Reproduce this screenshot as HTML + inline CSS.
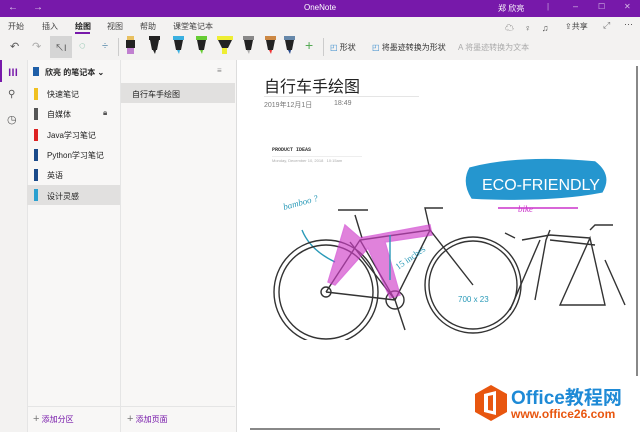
<html><head><style>
body{margin:0;width:640px;height:432px;overflow:hidden;font-family:"Liberation Sans","Noto Sans CJK SC",sans-serif;background:#fff;position:relative;font-size:8px;color:#222}
.a{position:absolute}
</style></head><body>
<div class="a" style="left:0;top:0;width:640px;height:17px;background:#7719aa;color:#fff">
<span class="a" style="left:8px;top:2px;font-size:10px;opacity:.8">←</span>
<span class="a" style="left:33px;top:2px;font-size:10px;opacity:.8">→</span>
<span class="a" style="left:304px;top:3px;font-size:8px">OneNote</span>
<span class="a" style="left:498px;top:3px;font-size:8px">郑 欣亮</span>
<span class="a" style="left:547px;top:2px;font-size:8px;opacity:.6">|</span>
<span class="a" style="left:573px;top:1px;font-size:9px;opacity:.7">–</span>
<span class="a" style="left:598px;top:2px;font-size:8px;opacity:.7">☐</span>
<span class="a" style="left:624px;top:2px;font-size:8px;opacity:.7">✕</span>
</div>
<div class="a" style="left:0;top:17px;width:640px;height:43px;background:#f3f2f1"></div>
<div class="a" style="top:21px;left:8px;font-size:8px;color:#444">开始</div>
<div class="a" style="top:21px;left:42px;font-size:8px;color:#444">插入</div>
<div class="a" style="top:21px;left:75px;font-size:8px;color:#222;font-weight:bold">绘图</div>
<div class="a" style="top:32px;left:75px;width:15px;height:2px;background:#7719aa"></div>
<div class="a" style="top:21px;left:107px;font-size:8px;color:#444">视图</div>
<div class="a" style="top:21px;left:140px;font-size:8px;color:#444">帮助</div>
<div class="a" style="top:21px;left:173px;font-size:8px;color:#444">课堂笔记本</div>
<div class="a" style="top:21px;left:505px;font-size:9px;color:#555;word-spacing:8px">☁ ♀ ♫</div>
<div class="a" style="top:21px;left:565px;font-size:8px;color:#444">⇪共享</div>
<div class="a" style="top:20px;left:603px;font-size:9px;color:#777">⤢</div>
<div class="a" style="top:19px;left:624px;font-size:9px;color:#444">···</div>
<div class="a" style="top:40px;left:10px;font-size:11px;color:#555">↶</div>
<div class="a" style="top:40px;left:32px;font-size:11px;color:#aaa">↷</div>
<div class="a" style="top:36px;left:50px;width:22px;height:22px;background:#d5d5d5"></div>
<div class="a" style="top:41px;left:55px;font-size:9px;color:#555">↖I</div>
<div class="a" style="top:40px;left:79px;font-size:11px;color:#5a8">◌</div>
<div class="a" style="top:40px;left:102px;font-size:11px;color:#58a">÷</div>
<div class="a" style="top:38px;left:118px;width:1px;height:18px;background:#ccc"></div>
<svg class="a" style="left:125px;top:36px" width="170" height="22">
<g><rect x="2" y="0" width="7" height="4" fill="#e8c060"/><rect x="1" y="4" width="9" height="8" fill="#222"/><rect x="2" y="12" width="7" height="6" fill="#c080d0"/></g>
<g transform="translate(24,0)"><rect x="0" y="0" width="11" height="4" fill="#222"/><path d="M1 4h9l-2 10h-5z" fill="#222"/><path d="M4 14h3l-1 4z" fill="#222"/></g>
<g transform="translate(48,0)"><rect x="0" y="0" width="11" height="4" fill="#3ab0e0"/><path d="M1 4h9l-2 10h-5z" fill="#222"/><path d="M4 14h3l-1 4z" fill="#3ab0e0"/></g>
<g transform="translate(71,0)"><rect x="0" y="0" width="11" height="4" fill="#6c3"/><path d="M1 4h9l-2 10h-5z" fill="#222"/><path d="M4 14h3l-1 4z" fill="#6c3"/></g>
<g transform="translate(92,0)"><rect x="0" y="0" width="16" height="4" fill="#ee3"/><path d="M1 4h14l-4 8h-6z" fill="#222"/><rect x="5" y="12" width="5" height="6" fill="#ee3"/></g>
<g transform="translate(118,0)"><rect x="0" y="0" width="11" height="4" fill="#888"/><path d="M1 4h9l-2 10h-5z" fill="#222"/><path d="M4 14h3l-1 4z" fill="#aaa"/></g>
<g transform="translate(140,0)"><rect x="0" y="0" width="11" height="4" fill="#c84"/><path d="M1 4h9l-2 10h-5z" fill="#222"/><path d="M4 14h3l-1 4z" fill="#e33"/></g>
<g transform="translate(159,0)"><rect x="0" y="0" width="11" height="4" fill="#68a"/><path d="M1 4h9l-2 10h-5z" fill="#222"/><path d="M4 14h3l-1 4z" fill="#248"/></g>
</svg>
<div class="a" style="top:37px;left:305px;font-size:14px;color:#5a5">+</div>
<div class="a" style="top:38px;left:323px;width:1px;height:18px;background:#ccc"></div>
<div class="a" style="top:42px;left:330px;font-size:8px;color:#333"><span style="color:#38c">◰</span> 形状</div>
<div class="a" style="top:42px;left:372px;font-size:8px;color:#333"><span style="color:#38c">◰</span> 将墨迹转换为形状</div>
<div class="a" style="top:42px;left:458px;font-size:8px;color:#aaa">A 将墨迹转换为文本</div>
<div class="a" style="left:0;top:60px;width:27px;height:372px;background:#f3f2f1"></div>
<div class="a" style="left:0;top:60px;width:2px;height:22px;background:#7719aa"></div>
<div class="a" style="left:8px;top:64px;font-size:10px;color:#7719aa;font-weight:bold">Ⅲ</div>
<div class="a" style="left:8px;top:89px;font-size:10px;color:#555">⚲</div>
<div class="a" style="left:7px;top:113px;font-size:11px;color:#555">◷</div>
<div class="a" style="left:27px;top:60px;width:93px;height:372px;background:#f8f7f6;border-left:1px solid #e5e5e5"></div>
<div class="a" style="left:120px;top:60px;width:115px;height:372px;background:#f8f7f6;border-left:1px solid #e5e5e5;border-right:1px solid #ddd"></div>
<div class="a" style="left:33px;top:67px;width:6px;height:9px;background:#1f5fa8"></div>
<div class="a" style="left:45px;top:67px;font-size:8px;font-weight:bold;color:#222">欣亮 的笔记本 ⌄</div>
<div class="a" style="left:217px;top:66px;font-size:8px;color:#888">≡</div>
<div class="a" style="left:27px;top:185px;width:93px;height:20px;background:#e1e0df"></div>
<div class="a" style="left:121px;top:83px;width:114px;height:20px;background:#e1e0df"></div>
<div class="a" style="left:132px;top:89px;font-size:8px">自行车手绘图</div>
<div class="a" style="left:34px;top:88px;width:4px;height:12px;background:#f0c020"></div><div class="a" style="left:47px;top:89px">快速笔记</div>
<div class="a" style="left:34px;top:108px;width:4px;height:12px;background:#555"></div><div class="a" style="left:47px;top:109px">自媒体</div><div class="a" style="left:103px;top:108px;color:#555">🔒︎</div>
<div class="a" style="left:34px;top:129px;width:4px;height:12px;background:#d22"></div><div class="a" style="left:47px;top:130px">Java学习笔记</div>
<div class="a" style="left:34px;top:149px;width:4px;height:12px;background:#1a4a8a"></div><div class="a" style="left:47px;top:150px">Python学习笔记</div>
<div class="a" style="left:34px;top:169px;width:4px;height:12px;background:#1a4a8a"></div><div class="a" style="left:47px;top:170px">英语</div>
<div class="a" style="left:34px;top:189px;width:4px;height:12px;background:#2aa0d0"></div><div class="a" style="left:47px;top:191px">设计灵感</div>
<div class="a" style="left:27px;top:406px;width:208px;height:1px;background:#e5e5e5"></div>
<div class="a" style="left:33px;top:413px;color:#7719aa;font-size:8px"><span style="font-size:11px;color:#777">+</span> 添加分区</div>
<div class="a" style="left:127px;top:413px;color:#7719aa;font-size:8px"><span style="font-size:11px;color:#777">+</span> 添加页面</div>
<div class="a" style="left:264px;top:73px;font-size:16px;color:#222">自行车手绘图</div>
<div class="a" style="left:264px;top:96px;width:155px;height:1px;background:#e5e5e5"></div>
<div class="a" style="left:264px;top:100px;font-size:7px;color:#777">2019年12月1日</div>
<div class="a" style="left:334px;top:100px;font-size:7px;color:#777">18:49</div>
<div class="a" style="left:636px;top:66px;width:2px;height:310px;background:#888"></div>
<div class="a" style="left:250px;top:428px;width:190px;height:2px;background:#888"></div>
<div class="a" style="left:272px;top:147px;font-size:5px;font-family:'Liberation Mono',monospace;color:#333;font-weight:bold">PRODUCT IDEAS</div>
<div class="a" style="left:272px;top:156px;width:90px;height:1px;background:#eee"></div>
<div class="a" style="left:272px;top:158px;font-size:4px;color:#aaa">Monday, December 10, 2018 &nbsp; 10:15am</div>
<svg class="a" style="left:250px;top:130px" width="386" height="210" fill="none" stroke="#333" stroke-width="1.4">
<path d="M220 38 Q270 25 345 32 Q362 45 352 62 Q300 72 222 68 Q212 52 220 38z" fill="#2596cf" stroke="#2596cf"/>
<text x="232" y="60" font-size="16" fill="#fff" stroke="none" font-family="Liberation Sans">ECO-FRIENDLY</text>
<path d="M248 78h80" stroke="#c3c"/><text x="268" y="82" font-size="9" fill="#c3c" stroke="none" font-style="italic" font-family="Liberation Serif">bike</text>
<text x="34" y="80" font-size="9" fill="#2a9ab8" stroke="none" font-style="italic" transform="rotate(-15 34 80)" font-family="Liberation Serif">bamboo ?</text>
<path d="M52 100 Q60 120 85 132" stroke="#2a9ab8"/>
<circle cx="76" cy="162" r="52"/><circle cx="76" cy="162" r="47"/>
<circle cx="223" cy="155" r="48"/><circle cx="223" cy="155" r="44"/>
<circle cx="76" cy="162" r="5"/><circle cx="145" cy="170" r="9"/>
<path d="M76 162 L110 110 L180 100 L223 155 M110 110 L145 170 L180 100 M76 162 L145 170 M145 170 L100 112 M105 85 L112 108 M88 80h30 M180 100 L175 78 h18 M145 170 L155 200"/>
<path d="M95 95 L110 108 L180 95 L182 105 L135 112 L150 165 L140 168 L118 118 L85 155 L78 152z" fill="#d040c8" stroke="#c3c" opacity=".65"/>
<path d="M140 105 V150" stroke="#2a9ab8"/>
<text x="148" y="140" font-size="9" fill="#2a9ab8" stroke="none" transform="rotate(-35 148 140)" font-family="Liberation Serif">15 inches</text>
<text x="208" y="172" font-size="8" fill="#2a9ab8" stroke="none" font-family="Liberation Sans">700 x 23</text>
<path d="M272 110 L300 105 L340 108 M300 100 L296 110 L285 170 M340 108 L355 175 L310 175 z M300 110 L345 115 M340 100 L345 95 h18 M290 110 L260 180 M355 130 L375 175 M265 108 l-10 -5"/>
</svg>
<svg class="a" style="left:474px;top:384px" width="34" height="38"><path d="M17 1 L33 10 V28 L17 37 L1 28 V10 Z" fill="#e8560f"/><path d="M10 10 L22 7 V31 L10 28 Z M14 12 V26 L19 27 V11 Z" fill="#fff"/></svg>
<div class="a" style="left:511px;top:383px;font-size:19px;font-weight:bold;color:#1e8ad6">Office<span style="font-family:'Noto Sans CJK SC';">教程网</span></div>
<div class="a" style="left:511px;top:407px;font-size:12px;font-weight:bold;color:#e8560f">www.office26.com</div>
</body></html>
